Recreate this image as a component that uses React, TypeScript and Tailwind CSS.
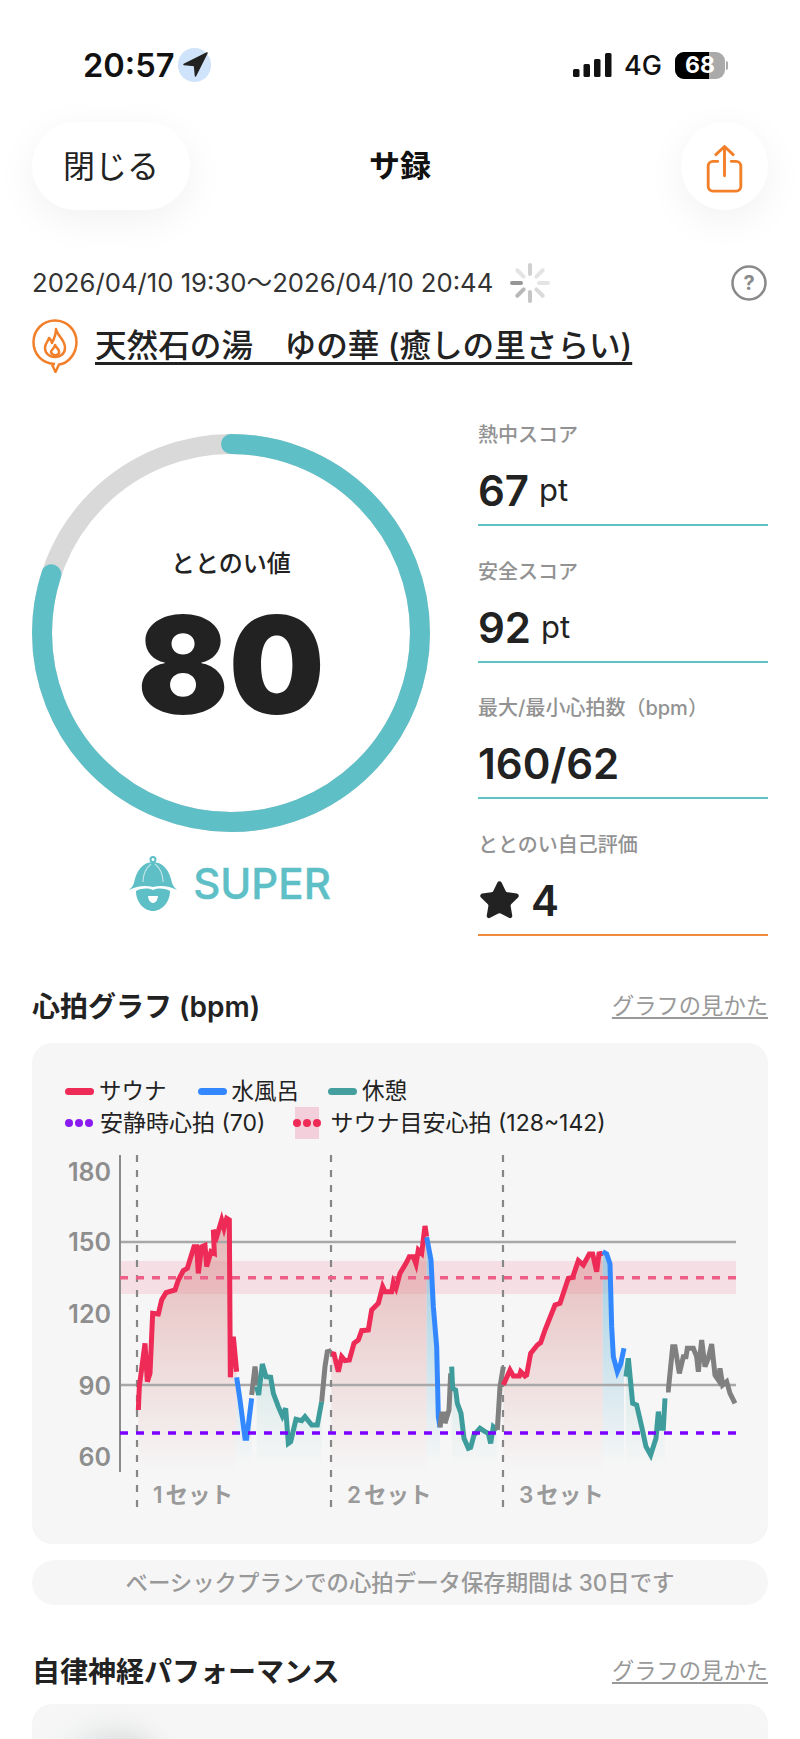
import React from 'react';
import { Star } from 'lucide-react';

const FONT = 'font-[Inter,"Noto_Sans_CJK_JP",sans-serif]';

type Segment = { kind: 'sauna' | 'bath' | 'rest' | 'idle'; points: number[][] };

// traced at 3x from the chart origin, scaled down in toPath
const segments: Segment[] = [
  { kind: 'sauna', points: [[325,810],[328,740],[345,610],[352,725],[360,700],[368,520],[385,522],[395,480],[408,458],[435,450],[445,420],[460,392],[472,385],[492,320],[500,320],[505,400],[515,320],[525,316],[530,380],[543,335],[553,340],[550,270],[560,290],[575,240],[582,265],[590,235],[598,240],[600,560],[601,712],[610,590],[620,695]] },
  { kind: 'bath', points: [[620,712],[630,780],[645,895],[650,895],[665,775]] },
  { kind: 'idle', points: [[665,765],[675,680],[682,735]] },
  { kind: 'rest', points: [[680,740],[686,765],[697,672],[708,710],[722,712],[730,760],[745,800],[757,828],[767,805],[775,910],[782,905],[798,838],[815,842],[825,830],[845,855],[862,855],[875,785]] },
  { kind: 'idle', points: [[875,785],[885,680],[892,635],[904,632]] },
  { kind: 'sauna', points: [[904,640],[912,642],[925,695],[935,650],[945,662],[958,660],[972,610],[985,600],[995,572],[1015,570],[1025,510],[1045,490],[1058,440],[1065,455],[1085,455],[1090,428],[1098,445],[1110,400],[1128,370],[1138,350],[1150,350],[1158,372],[1165,330],[1175,340],[1185,258],[1190,290]] },
  { kind: 'bath', points: [[1190,292],[1203,360],[1210,500],[1220,620],[1225,830],[1230,862]] },
  { kind: 'idle', points: [[1230,862],[1235,822],[1245,822],[1245,850],[1257,810],[1262,700]] },
  { kind: 'rest', points: [[1265,680],[1268,745],[1277,750],[1282,790],[1293,820],[1302,895],[1315,925],[1322,922],[1332,885],[1350,865],[1365,875],[1375,880],[1382,910],[1390,860],[1402,870]] },
  { kind: 'idle', points: [[1402,870],[1410,740],[1420,680]] },
  { kind: 'sauna', points: [[1420,735],[1440,690],[1450,708],[1468,708],[1472,695],[1485,708],[1490,705],[1502,640],[1510,630],[1522,615],[1532,608],[1545,570],[1575,495],[1590,490],[1615,415],[1628,412],[1645,362],[1660,375],[1678,342],[1688,342],[1700,395],[1707,342],[1718,340]] },
  { kind: 'bath', points: [[1718,335],[1730,342],[1740,372],[1745,560],[1750,650],[1762,695],[1772,672],[1782,625]] },
  { kind: 'rest', points: [[1788,710],[1795,655],[1808,790],[1820,795],[1835,860],[1848,920],[1862,945],[1878,895],[1885,815],[1892,865],[1900,865],[1905,775]] },
  { kind: 'idle', points: [[1908,750],[1915,750],[1928,620],[1935,620],[1948,700],[1960,650],[1968,650],[1972,625],[1990,625],[2000,650],[2005,695],[2015,600],[2025,680],[2035,655],[2045,612],[2055,705],[2065,720],[2070,685],[2078,735],[2090,725],[2100,760],[2115,790]] },
];

const LINE_COLOR = { sauna: '#ee2a56', bath: '#3388ff', rest: '#3f9c9c', idle: '#808080' };
const AREA_FILL = { sauna: 'url(#saunaArea)', bath: 'url(#bathArea)', rest: 'url(#restArea)', idle: 'none' };

const toX = (x: number) => x / 3 - 2;
const toY = (y: number) => y / 3 - 10;
const toPath = (points: number[][]) => points.map(([x, y]) => `${toX(x)},${toY(y)}`).join(' ');

const BOTTOM = 322;

const HeartChart: React.FC = () => {
  const yLabels = [
    { label: '180', y: 22 },
    { label: '150', y: 92 },
    { label: '120', y: 164 },
    { label: '90', y: 236 },
    { label: '60', y: 307 },
  ];
  const sets = [
    { x: 105, label: '1セット', lineX: 105 },
    { x: 299, label: '2セット', lineX: 299 },
    { x: 471, label: '3セット', lineX: 471 },
  ];

  return (
    <svg width={736} height={370} viewBox="0 0 736 370" className="mt-[11px] block">
      <defs>
        <linearGradient id="saunaArea" gradientUnits="userSpaceOnUse" x1="0" y1="90" x2="0" y2="322">
          <stop offset="0" stopColor="#d98a8a" stopOpacity="0.55" />
          <stop offset="1" stopColor="#d98a8a" stopOpacity="0" />
        </linearGradient>
        <linearGradient id="bathArea" gradientUnits="userSpaceOnUse" x1="0" y1="90" x2="0" y2="315">
          <stop offset="0" stopColor="#7fc0dc" stopOpacity="0.75" />
          <stop offset="1" stopColor="#7fc0dc" stopOpacity="0" />
        </linearGradient>
        <linearGradient id="restArea" gradientUnits="userSpaceOnUse" x1="0" y1="200" x2="0" y2="318">
          <stop offset="0" stopColor="#6fbdb8" stopOpacity="0.25" />
          <stop offset="1" stopColor="#6fbdb8" stopOpacity="0" />
        </linearGradient>
      </defs>

      {/* target zone */}
      <rect x={88} y={111} width={616} height={33} fill="#f5dfe5" />

      {/* area under each segment */}
      {segments.map((s, i) =>
        s.kind === 'idle' ? null : (
          <polygon
            key={i}
            fill={AREA_FILL[s.kind]}
            points={`${toX(s.points[0][0])},${BOTTOM} ${toPath(s.points)} ${toX(s.points[s.points.length - 1][0])},${BOTTOM}`}
          />
        ),
      )}

      {/* grid */}
      <line x1={88} x2={704} y1={92} y2={92} stroke="#a8a8a8" strokeWidth={2.5} />
      <line x1={88} x2={704} y1={235} y2={235} stroke="#a8a8a8" strokeWidth={2.5} />
      <line x1={88} x2={88} y1={5} y2={322} stroke="#8c8c8c" strokeWidth={2} />
      {sets.map((s) => (
        <line key={s.x} x1={s.lineX} x2={s.lineX} y1={5} y2={363} stroke="#868686" strokeWidth={2.2} strokeDasharray="7 8" />
      ))}

      {/* reference lines */}
      <line x1={88} x2={704} y1={127.7} y2={127.7} stroke="#ee5f88" strokeWidth={3.5} strokeDasharray="8 8" />

      {segments.map((s, i) => (
        <polyline
          key={i}
          fill="none"
          points={toPath(s.points)}
          stroke={LINE_COLOR[s.kind]}
          strokeWidth={5}
          strokeLinejoin="miter"
        />
      ))}

      <line x1={88} x2={704} y1={283} y2={283} stroke="#7a00ff" strokeWidth={3.5} strokeDasharray="8 8" />

      {yLabels.map((l) => (
        <text key={l.label} x={79} y={l.y + 9} textAnchor="end" fontSize={25} fontWeight={600} fill="#8e8e8e">
          {l.label}
        </text>
      ))}
      {sets.map((s) => (
        <text key={s.label} x={s.x + 16} y={353} fontSize={22.5} fontWeight={600} fill="#9a9a9a">
          {s.label.slice(0, 1)}
          <tspan dx={3}>{s.label.slice(1)}</tspan>
        </text>
      ))}
    </svg>
  );
};

const ScoreItem: React.FC<{ label: string; lineClass?: string; first?: boolean; children: React.ReactNode }> = ({
  label,
  lineClass = 'border-[#5fc3c6]',
  first,
  children,
}) => (
  <div className={`border-b-2 ${lineClass} ${first ? '' : 'mt-[31.7px]'}`}>
    <div className="h-[28px] text-[20px] leading-[28px] font-medium whitespace-nowrap text-[#929292]">{label}</div>
    <div className="mt-[8px] flex h-[67px] items-center text-[#222]">{children}</div>
  </div>
);

const DashSwatch: React.FC<{ color: string }> = ({ color }) => (
  <span className="h-[7px] w-[29px] rounded-full" style={{ backgroundColor: color }} />
);

const Dots: React.FC<{ className: string }> = ({ className }) => (
  <span className="flex w-[28px] justify-between">
    <i className={`h-[8px] w-[8px] rounded-full ${className}`} />
    <i className={`h-[8px] w-[8px] rounded-full ${className}`} />
    <i className={`h-[8px] w-[8px] rounded-full ${className}`} />
  </span>
);

const HowToLink: React.FC = () => (
  <span className="-mt-[3px] text-[22.3px] leading-[30px] text-[#999] underline underline-offset-[3px]">グラフの見かた</span>
);

const Spinner: React.FC = () => {
  const spokes = [
    { a: 0, o: 0.28 },
    { a: 45, o: 0.16 },
    { a: 90, o: 0.16 },
    { a: 135, o: 0.22 },
    { a: 180, o: 0.34 },
    { a: 225, o: 0.42 },
    { a: 270, o: 0.62 },
    { a: 315, o: 0.16 },
  ];
  return (
    <svg width={40} height={40} viewBox="-20 -20 40 40" className="ml-[17px]">
      {spokes.map((s) => (
        <line
          key={s.a}
          x1={0}
          y1={-18}
          x2={0}
          y2={-9}
          stroke="#555"
          strokeOpacity={s.o}
          strokeWidth={4}
          strokeLinecap="round"
          transform={`rotate(${s.a})`}
        />
      ))}
    </svg>
  );
};

const App: React.FC = () => {
  const r = 189;
  const circumference = 2 * Math.PI * r;

  return (
    <div className={`h-[1739px] w-[800px] overflow-hidden bg-white text-[#222] ${FONT}`}>
      {/* status bar */}
      <div className="flex h-[122px] items-start justify-between pt-[48px] pr-[72px] pl-[83px]">
        <div className="flex h-[34px] items-center">
          <span className="text-[32.6px] leading-none font-semibold text-[#111]">20:57</span>
          <span className="ml-[4px] flex h-[34px] w-[33px] items-center justify-center rounded-full bg-[#cfe3fa]">
            <svg width={26} height={26} viewBox="0 0 26 26">
              <path d="M25 1 L2 12.5 L12.5 13.5 L13.5 24 Z" fill="#222" stroke="#222" strokeWidth={1.5} strokeLinejoin="round" />
            </svg>
          </span>
        </div>
        <div className="flex h-[34px] items-center">
          <svg width={39} height={24} viewBox="0 0 39 24">
            <rect x={0} y={16} width={6.5} height={8} rx={1.5} fill="#111" />
            <rect x={10.5} y={11} width={6.5} height={13} rx={1.5} fill="#111" />
            <rect x={21} y={6} width={6.5} height={18} rx={1.5} fill="#111" />
            <rect x={32} y={0} width={6.5} height={24} rx={1.5} fill="#111" />
          </svg>
          <span className="ml-[12px] text-[27px] leading-none font-medium text-[#111]">4G</span>
          <div className="relative ml-[13px] flex h-[27px] w-[50px] overflow-hidden rounded-[9px] bg-[#aaaaaa]">
            <div className="h-full w-[34px] bg-black" />
            <span className="absolute inset-0 flex items-center justify-center text-[23px] leading-none font-bold text-white">68</span>
          </div>
          <div className="ml-[1px] h-[9px] w-[2px] rounded-r-full bg-[#aaaaaa]" />
        </div>
      </div>

      {/* nav */}
      <div className="grid h-[88px] grid-cols-[1fr_auto_1fr] items-center px-8">
        <div className="flex h-[88px] w-[158px] items-center justify-center rounded-[44px] bg-white pt-[1px] text-[32px] shadow-[0_10px_40px_rgba(0,0,0,0.06)]">
          閉じる
        </div>
        <div className="text-[31px] font-bold text-[#111]">サ録</div>
        <div className="flex h-[88px] w-[87px] items-center justify-center justify-self-end rounded-full bg-white shadow-[0_10px_40px_rgba(0,0,0,0.06)]">
          <svg width={37} height={48} viewBox="0 0 38 50" className="mt-[6px]" fill="none" stroke="#f27f2a" strokeWidth={3} strokeLinecap="round" strokeLinejoin="round">
            <path d="M19 32 V2 M10 10 L19 1.5 L28 10" />
            <path d="M12 17 H7 a5 5 0 0 0 -5 5 V43 a5 5 0 0 0 5 5 H31 a5 5 0 0 0 5 -5 V22 a5 5 0 0 0 -5 -5 H26" />
          </svg>
        </div>
      </div>

      {/* date */}
      <div className="mt-[53px] flex h-[40px] items-center justify-between pr-[33px] pl-8">
        <div className="flex items-center">
          <span className="pt-[1px] text-[25.7px] whitespace-nowrap text-[#333]">2026/04/10 19:30～2026/04/10 20:44</span>
          <Spinner />
        </div>
        <svg width={36} height={36} viewBox="0 0 36 36">
          <circle cx={18} cy={18} r={16.5} fill="none" stroke="#8a8a8a" strokeWidth={2.5} />
          <text x={18} y={25} textAnchor="middle" fontSize={20} fontWeight={700} fill="#8a8a8a">?</text>
        </svg>
      </div>

      {/* facility */}
      <div className="mt-[16px] flex h-[54px] items-center px-8">
        <svg width={46} height={54} viewBox="0 0 46 54" fill="none" stroke="#f27f2a" strokeWidth={2.5} strokeLinejoin="round">
          <path d="M23 45 C10 44.5 1.5 35 1.5 23 C1.5 11 11 1.5 23 1.5 C35 1.5 44.5 11 44.5 23 C44.5 35 36 44.5 27 45.5 L23.5 53 L20 45.5" />
          <path d="M24 10 C25 17 33 20 33 29 C33 35 28 38 23 38 C17 38 13 34 13 29 C13 24 16 23 17 19 C19 21 20 22 20 24 C22 20 24 15 24 10 Z" />
          <path d="M23 26 C24 29 28 30 27 34 C26 37 20 37 19 33 C19 31 22 30 23 26 Z" />
        </svg>
        <span className="ml-[17px] text-[31.6px] leading-[44px] font-medium whitespace-nowrap text-[#222] underline decoration-[3px] underline-offset-[5px]">
          天然石の湯　ゆの華 (癒しの里さらい)
        </span>
      </div>

      {/* score */}
      <div className="mt-[48px] flex gap-[48px] px-8">
        <div className="w-[398px] pt-[13px]">
          <div className="relative h-[398px] w-[398px]">
            <svg width={398} height={398} viewBox="0 0 398 398">
              <circle cx={199} cy={199} r={r} fill="none" stroke="#d9d9d9" strokeWidth={20} />
              <circle
                cx={199}
                cy={199}
                r={r}
                fill="none"
                stroke="#5fbfc6"
                strokeWidth={20}
                strokeLinecap="round"
                strokeDasharray={`${circumference * 0.8} ${circumference}`}
                transform="rotate(-90 199 199)"
              />
            </svg>
            <div className="absolute inset-0 flex flex-col items-center">
              <div className="mt-[114px] text-[24px] leading-[32px] font-medium text-[#222]">ととのい値</div>
              <div className="mt-[18px] text-[135px] leading-[135px] font-black text-[#222]">80</div>
            </div>
          </div>
          <div className="mt-[24px] flex items-center justify-center">
            <svg width={50} height={56} viewBox="0 0 50 56" className="-ml-[3px]">
              <circle cx={25} cy={3.5} r={2.5} fill="none" stroke="#5fbfc6" strokeWidth={2} />
              <path d="M1 34 C3 32 5 30 6 27 C8 15 15 6 25 6 C35 6 42 15 44 27 C45 30 47 32 49 34 C41 30 33 29 25 31 C17 29 9 30 1 34 Z" fill="#5fbfc6" />
              <path d="M8 35 C14 32 20 32 25 34 C30 32 36 32 42 35 C42 46 34 55 25 55 C16 55 8 46 8 35 Z" fill="#5fbfc6" />
              <path d="M20 40 H30 C29.5 45 27 47 25 47 C23 47 20.5 45 20 40 Z" fill="#fff" />
              <path d="M15 26 C15 18 18 12 23 8 M35 26 C35 18 32 12 27 8" fill="none" stroke="#fff" strokeOpacity={0.6} strokeWidth={1.2} />
            </svg>
            <span className="ml-[15px] text-[42px] leading-[50px] font-medium text-[#5fbfc6] [-webkit-text-stroke:0.4px_#5fbfc6]">SUPER</span>
          </div>
        </div>

        <div className="w-[290px]">
          <ScoreItem label="熱中スコア" first>
            <span className="text-[42px] font-semibold">67</span>
            <span className="ml-[10px] text-[31px]">pt</span>
          </ScoreItem>
          <ScoreItem label="安全スコア">
            <span className="text-[42px] font-semibold">92</span>
            <span className="ml-[10px] text-[31px]">pt</span>
          </ScoreItem>
          <ScoreItem label="最大/最小心拍数（bpm）">
            <span className="text-[42px] font-semibold">160/62</span>
          </ScoreItem>
          <ScoreItem label="ととのい自己評価" lineClass="border-[#f08a3c]">
            <Star size={43} fill="#222" strokeWidth={1.5} className="text-[#222]" />
            <span className="ml-[10px] text-[42px] font-semibold">4</span>
          </ScoreItem>
        </div>
      </div>

      {/* heart rate */}
      <div className="mt-[51px] flex h-[40px] items-center justify-between px-8">
        <span className="text-[28px] font-semibold text-[#222]">心拍グラフ (bpm)</span>
        <HowToLink />
      </div>
      <div className="mx-8 mt-4 h-[501px] overflow-hidden rounded-[20px] bg-[#f6f6f6] pt-[32px]">
        <div className="flex h-[32px] items-center pl-[33px] text-[22.5px] text-[#222]">
          <DashSwatch color="#ee2a56" />
          <span className="ml-[5px]">サウナ</span>
          <span className="ml-[31px] flex items-center">
            <DashSwatch color="#3388ff" />
            <span className="ml-[5px]">水風呂</span>
          </span>
          <span className="ml-[29px] flex items-center">
            <DashSwatch color="#459f9f" />
            <span className="ml-[5px]">休憩</span>
          </span>
        </div>
        <div className="flex h-[32px] items-center pl-[33px] text-[23px] text-[#222]">
          <Dots className="bg-[#8a1cf0]" />
          <span className="ml-[7px]">安静時心拍 (70)</span>
          <span className="relative ml-[28px] flex h-[32px] w-[28px] items-center">
            <span className="absolute top-0 left-[2px] h-[32px] w-[24px] bg-[#f3cfdb]" />
            <span className="relative">
              <Dots className="bg-[#ee2a56]" />
            </span>
          </span>
          <span className="ml-[9px]">サウナ目安心拍 (128~142)</span>
        </div>
        <HeartChart />
      </div>
      <div className="mx-8 mt-4 flex h-[45px] items-center justify-center rounded-full bg-[#f6f6f6] text-[22.4px] font-medium text-[#999]">
        ベーシックプランでの心拍データ保存期間は 30日です
      </div>

      {/* autonomic nerve */}
      <div className="mt-[47px] flex h-[40px] items-center justify-between px-8">
        <span className="text-[28px] font-semibold text-[#222]">自律神経パフォーマンス</span>
        <HowToLink />
      </div>
      <div className="relative mx-8 mt-3 h-[80px] overflow-hidden rounded-[20px] bg-[#f6f6f6]">
        <div className="absolute top-[28px] left-[28px] h-[90px] w-[100px] rounded-full bg-[linear-gradient(90deg,#d5e8e8,#8f8f8f)] opacity-40 blur-[14px]" />
      </div>
    </div>
  );
};

export default App;
